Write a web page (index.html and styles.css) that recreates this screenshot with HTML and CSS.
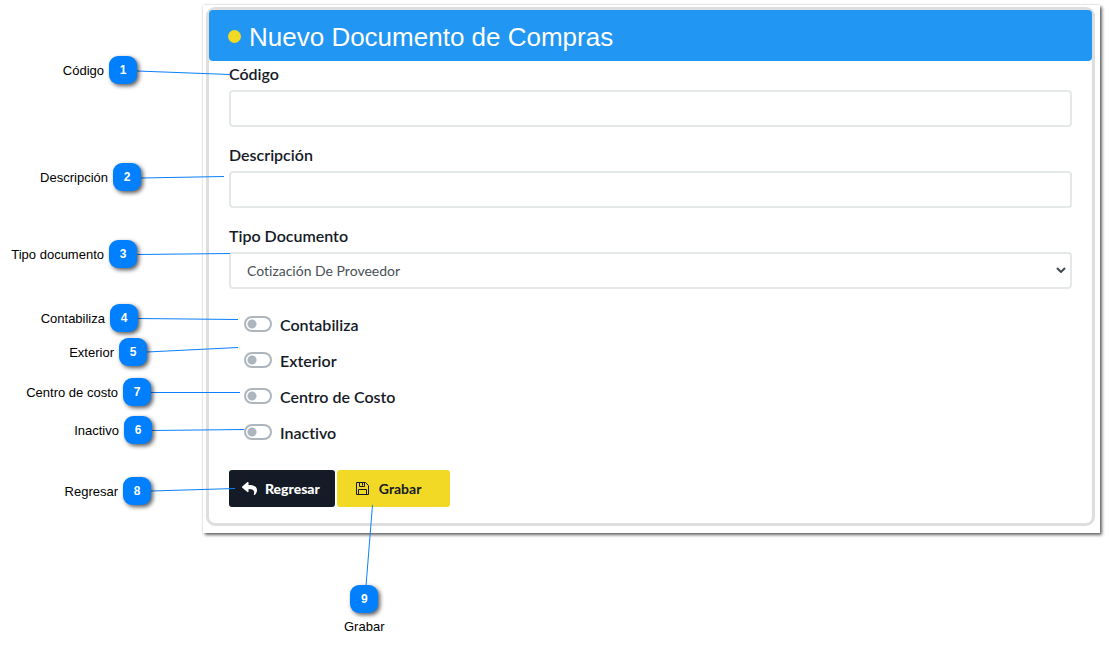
FILE: index.html
```html
<!DOCTYPE html>
<html lang="es">
<head>
<meta charset="utf-8">
<title>Nuevo Documento de Compras</title>
<link rel="stylesheet" href="styles.css">
</head>
<body>
<main class="page">
  <section class="sheet">
    <form class="card">
      <header class="card-header">
        <span class="dot"></span>
        <h1 class="title">Nuevo Documento de Compras</h1>
      </header>
      <div class="card-body">
        <div class="field">
          <label for="codigo">Código</label>
          <input class="control" id="codigo" type="text">
        </div>
        <div class="field">
          <label for="descripcion">Descripción</label>
          <input class="control" id="descripcion" type="text">
        </div>
        <div class="field">
          <label for="tipo">Tipo Documento</label>
          <div class="select-wrap">
            <select class="control" id="tipo"><option>Cotización De Proveedor</option></select>
            <svg class="chevron" viewBox="0 0 10 6" aria-hidden="true"><path d="M1 1l4 4 4-4"/></svg>
          </div>
        </div>
        <div class="switches">
          <label class="switch"><input type="checkbox" name="contabiliza"><span>Contabiliza</span></label>
          <label class="switch"><input type="checkbox" name="exterior"><span>Exterior</span></label>
          <label class="switch"><input type="checkbox" name="centro"><span>Centro de Costo</span></label>
          <label class="switch"><input type="checkbox" name="inactivo"><span>Inactivo</span></label>
        </div>
        <div class="actions">
          <button class="btn btn-dark" type="button">
            <svg class="icon-reply" viewBox="0 0 512 512" aria-hidden="true"><path d="M8.300 189.800L184.300 37.900C199.700 24.500 224 35.300 224 56v80.100C384.600 137.900 512 170.100 512 322.300c0 61.400-39.600 122.300-83.300 154.100-13.700 9.900-33.100-2.500-28.100-18.600C445.900 312.800 379.100 274.300 224 272v88c0 20.700-24.300 31.500-39.700 18.200l-176-152c-11.100-9.600-11.100-26.800 0-36.400z"/></svg>
            Regresar
          </button>
          <button class="btn btn-yellow" type="button">
            <svg class="icon-save" viewBox="0 0 13 13" aria-hidden="true"><path d="M.5.5h9l3 3v9H.5z"/><path d="M3.500.5v4h5v-4M6.500 1v2.500M2.500 12.500v-5h8v5"/></svg>
            Grabar
          </button>
        </div>
      </div>
    </form>
  </section>

  <aside class="callouts">
    <svg class="leaders" width="480" height="650" aria-hidden="true">
      <path d="M137 71L230 74.500M141 178L224 176.500M137 254.500L230 253.500M138 318.500L238 319.500M147 352L238 347.500M151 392.500L240 392.500M152 430.500L244 429.500M151 491L235 488.500M366 586L372.500 505"/>
    </svg>
    <div class="callout c1"><span>Código</span><b class="badge">1</b></div>
    <div class="callout c2"><span>Descripción</span><b class="badge">2</b></div>
    <div class="callout c3"><span>Tipo documento</span><b class="badge">3</b></div>
    <div class="callout c4"><span>Contabiliza</span><b class="badge">4</b></div>
    <div class="callout c5"><span>Exterior</span><b class="badge">5</b></div>
    <div class="callout c7"><span>Centro de costo</span><b class="badge">7</b></div>
    <div class="callout c6"><span>Inactivo</span><b class="badge">6</b></div>
    <div class="callout c8"><span>Regresar</span><b class="badge">8</b></div>
    <div class="callout c9"><b class="badge">9</b><span>Grabar</span></div>
  </aside>
</main>
</body>
</html>
```
FILE: styles.css
```css
* { box-sizing: border-box; }

body {
  margin: 0;
  background: #fff;
  color: #141a26;
  font-family: Lato, sans-serif;
  font-variant-ligatures: none;
}

.page {
  position: relative;
  min-height: 100vh;
  padding: 5px 9px 0 203px;
}

.sheet {
  padding: 2px 5px 7px 3px;
  background: #fff;
  box-shadow: 2px 2px 3px rgba(0, 0, 0, .6), 0 0 2px rgba(0, 0, 0, .2);
}

.card {
  border: 3px solid #dedede;
  border-radius: 9px;
}

.card-header {
  display: flex;
  align-items: center;
  gap: 8px;
  height: 51px;
  padding: 2px 20px 0 19px;
  border-radius: 4px;
  background: #2196f3;
}

.dot {
  width: 13px;
  height: 13px;
  border-radius: 50%;
  background: #f1d926;
}

.title {
  margin: 0;
  color: #fff;
  font: 400 26px/32px "Liberation Sans", Arial, sans-serif;
}

.card-body { padding: 3px 20px 16px; }

.field { margin-bottom: 18px; }

.field > label {
  display: block;
  height: 26px;
  font-size: 16px;
  font-weight: 600;
  line-height: 19px;
}

.control {
  display: block;
  width: 100%;
  height: 37px;
  padding: 0 16px;
  border: 2px solid #e4e8e8;
  border-radius: 4px;
  background: #fff;
  color: #495057;
  font: 400 14px/20px Lato, sans-serif;
  font-variant-ligatures: none;
  appearance: none;
}

.select-wrap { position: relative; }

.chevron {
  position: absolute;
  top: 15px;
  right: 6px;
  width: 10px;
  height: 6px;
  fill: none;
  stroke: #41484f;
  stroke-width: 2;
}

.switches { padding: 0 15px; }

.switch {
  display: flex;
  align-items: center;
  gap: 8px;
  height: 34px;
  margin-bottom: 2px;
  font-size: 16px;
  font-weight: 600;
}

.switch input {
  width: 28px;
  height: 16px;
  margin: 0;
  border: 2px solid #adb5bd;
  border-radius: 8px;
  background: radial-gradient(circle at 6px 6px, #adb5bd 4px, transparent 5px);
  appearance: none;
}

.actions {
  display: flex;
  gap: 2px;
  margin-top: 21px;
}

.btn {
  display: flex;
  align-items: center;
  height: 37px;
  border: 0;
  border-radius: 3px;
  font: 700 14px/20px Lato, sans-serif;
}

.btn-dark {
  gap: 8px;
  padding: 0 15px 0 13px;
  background: #141a26;
  color: #fff;
  font-weight: 900;
}

.btn-yellow {
  gap: 10px;
  padding: 0 29px 0 19px;
  background: #f1d926;
  color: #141a26;
}

.icon-reply { width: 15px; height: 15px; fill: #fff; }

.icon-save { width: 13px; height: 13px; fill: none; stroke: #141a26; }

/* Numbered notes laid over the form */
.callouts {
  position: absolute;
  top: 0;
  left: 0;
  width: 160px;
  color: #000;
  font: 13px/16px "Liberation Sans", Arial, sans-serif;
  pointer-events: none;
}

.leaders {
  position: absolute;
  top: 0;
  left: 0;
  fill: none;
  stroke: #0a80ff;
}

.callout {
  position: absolute;
  display: flex;
  align-items: center;
  gap: 5px;
  white-space: nowrap;
}

.callout span { padding-top: 2px; }

.badge {
  width: 28px;
  height: 28px;
  border-radius: 9px;
  background: #0080ff;
  box-shadow: 2px 2px 4px rgba(0, 0, 0, .65);
  color: #fff;
  font-size: 12px;
  line-height: 29px;
  text-align: center;
}

.c1 { top: 56px; right: 23px; }
.c2 { top: 163px; right: 19px; }
.c3 { top: 240px; right: 23px; }
.c4 { top: 304px; right: 22px; }
.c5 { top: 338px; right: 13px; }
.c7 { top: 378px; right: 9px; }
.c6 { top: 416px; right: 8px; }
.c8 { top: 477px; right: 9px; }
.c9 { top: 585px; left: 344px; gap: 4px; flex-direction: column; }
```
